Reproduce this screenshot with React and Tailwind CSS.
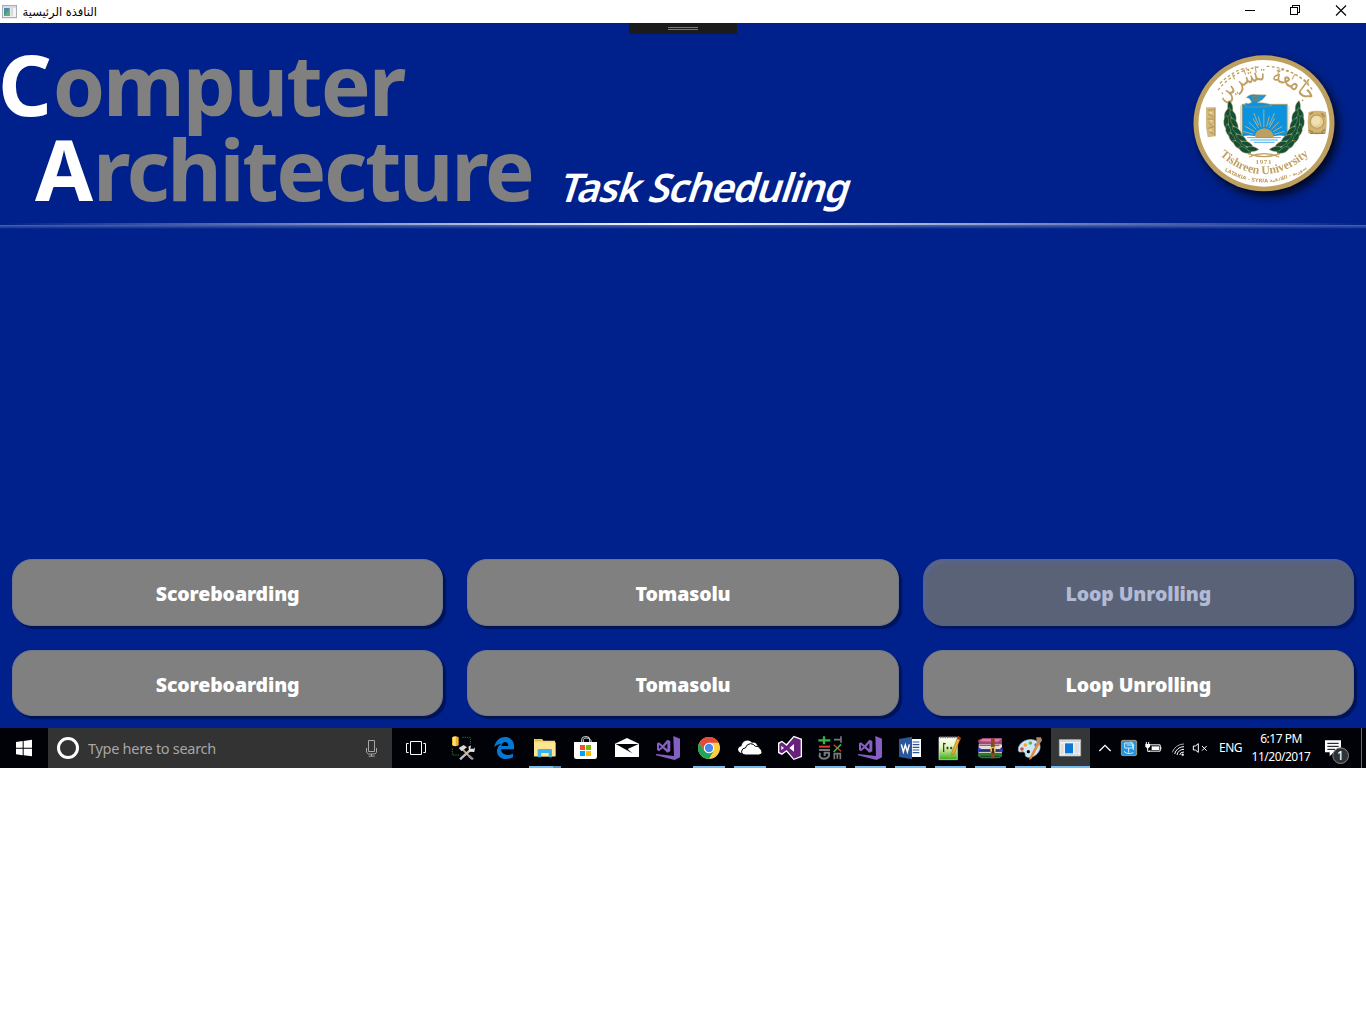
import React from "react";

const actions = [
  { label: "Scoreboarding" },
  { label: "Tomasolu" },
  { label: "Loop Unrolling", disabled: true },
  { label: "Scoreboarding" },
  { label: "Tomasolu" },
  { label: "Loop Unrolling" },
];

function TitleBar() {
  return (
    <div className="flex h-[23px] items-center justify-between bg-white">
      <div className="flex items-center">
        <svg className="ml-[2px] h-[14px] w-[15px]" viewBox="0 0 45 42">
          <rect x="1" y="1" width="43" height="37" fill="#eef0f2" stroke="#9aa0a6" strokeWidth="3" />
          <rect x="3" y="4" width="39" height="4" fill="#c9d3dd" />
          <rect x="6" y="9" width="17" height="24" fill="#4d8f9c" />
          <path d="M6 33L23 12V33Z" fill="#5fae7c" />
          <rect x="26" y="9" width="7" height="24" fill="#d9dcdf" />
          <rect x="35" y="9" width="5" height="24" fill="#f7f7f7" />
        </svg>
        <span dir="rtl" className="ml-[6px] inline-block w-[74px] whitespace-nowrap font-['DejaVu_Sans',sans-serif] text-[11.500px] leading-[22px] text-black">
          النافذة الرئيسية
        </span>
      </div>
      <svg className="h-[23px] w-[140px]" viewBox="0 0 140 23" fill="none" stroke="#000" shapeRendering="crispEdges">
        <path d="M19 10.5h10" />
        <path d="M64.5 7.5h7v7h-7zM66.5 7.5v-2h7v7h-2" />
        <path d="M110 5.500l10 10M120 5.500l-10 10" shapeRendering="auto" strokeWidth="1.100" />
      </svg>
    </div>
  );
}

function Laurel() {
  const leaves = [
    [152, 322, -12], [142, 342, 22], [161, 347, -25], [139, 366, 5], [165, 370, -35],
    [146, 392, -12], [173, 393, -48], [158, 415, -28], [186, 414, -60], [175, 435, -45],
    [203, 432, -70], [195, 450, -62], [219, 446, -85],
  ];
  return (
    <g fill="#0f5136" stroke="#b39a5c" strokeWidth="1.200">
      <path d="M151 312Q136 400 212 458" fill="none" stroke="#0f5136" strokeWidth="12" />
      {leaves.map(([x, y, r]) => (
        <path key={x + "-" + y} d="M0 -22Q15 -3 0 18Q-15 -3 0 -22Z" transform={`translate(${x} ${y}) rotate(${r})`} />
      ))}
    </g>
  );
}

function Emblem() {
  const rays = [-75, -60, -45, -30, -15, 15, 30, 45, 60, 75];
  return (
    <svg
      className="h-[137px] w-[142px] drop-shadow-[4px_5px_5px_rgba(0,0,0,0.8)]"
      viewBox="40 164 425 411"
      preserveAspectRatio="none"
    >
      <defs>
        <path id="arcTop" d="M133 304Q252 176 384 304" />
        <path id="arcName" d="M121 465Q250 578 386 465" />
        <path id="arcCity" d="M134 511Q255 584 382 505" />
      </defs>
      <ellipse cx="252.500" cy="369" rx="211" ry="204" fill="#bd9f5f" />
      <ellipse cx="252.500" cy="369" rx="196" ry="190" fill="#fff" />
      <g fill="#bfa062" textAnchor="middle">
        <text direction="rtl" fontFamily="DejaVu Sans, sans-serif" fontSize="70">
          <textPath href="#arcTop" startOffset="50%" textLength="296" lengthAdjust="spacingAndGlyphs">جامعة تشرين</textPath>
        </text>
        <text fontFamily="Liberation Serif, serif" fontSize="36" fontWeight="700">
          <textPath href="#arcName" startOffset="50%" textLength="296" lengthAdjust="spacingAndGlyphs">Tishreen University</textPath>
        </text>
        <text fontFamily="DejaVu Sans, sans-serif" fontSize="15" fontWeight="700">
          <textPath href="#arcCity" startOffset="50%" textLength="262" lengthAdjust="spacingAndGlyphs">LATAKIA - SYRIA سورية - اللاذقية</textPath>
        </text>
        <text x="251" y="491" fontFamily="Liberation Serif, serif" fontSize="21" fontWeight="700" textLength="48">1971</text>
      </g>
      <g stroke="#bfa062" strokeWidth="4" strokeLinecap="round" strokeDasharray="5 10" fill="none">
        <path d="M116 268Q160 212 235 200" />
        <path d="M122 248Q165 208 200 203M262 198Q350 203 400 272M305 208Q345 215 385 248" />
        <path d="M158 220l6 16M192 206l5 16M226 198l3 18M298 206l-4 16M345 222l-8 14" strokeDasharray="none" strokeWidth="3" />
      </g>
      <path d="M187 312H322V410H187Z" fill="#0c93e0" stroke="#b8985a" strokeWidth="2.500" />
      <path d="M182 316v92M327 316v92" stroke="#e3d8ba" strokeWidth="3" />
      <path d="M196 308Q208 314 216 305L208 294L200 292Q210 280 228 283L259 284Q250 300 231 307Q264 306 276 316L242 320H198Z" fill="#0c93e0" stroke="#b8985a" strokeWidth="1.500" />
      <path d="M214 290L257 284.500M216 296L250 291M218 302L243 297" stroke="#a98d4c" strokeWidth="2" />
      <g stroke="#c0b384" strokeWidth="2.500">
        {rays.map((r) => (
          <path key={r} d="M252 378V346" transform={`rotate(${r} 252 410)`} />
        ))}
        <path d="M252 380V328M236 374L222 338M268 374L284 338" />
      </g>
      <path d="M224 412Q226 387 253 384Q280 387 282 412Z" fill="#bd9f5f" />
      <path d="M186 408Q220 402 232 412H274Q290 402 320 408L296 440H210Z" fill="#fff" />
      <path d="M202 412H303M212 419H294M222 426H284" stroke="#2b9be0" strokeWidth="2.500" />
      <Laurel />
      <g transform="translate(505 0) scale(-1 1)"><Laurel /></g>
      <path d="M205 460Q252 478 300 460M208 470Q252 450 298 470" fill="none" stroke="#bd9f5f" strokeWidth="4" />
      <path d="M79 321H108V408L84 411L79 380Z" fill="#d3b97f" />
      <path d="M84 330l18 -3M85 342l17 8M83 356h20M87 366l12 14M84 384l20 -5M90 394l12 8M105 322v84" stroke="#a98d4c" strokeWidth="2.500" />
      <path d="M90 336l8 3M91 361l8 2M88 389l8 2" stroke="#efdca9" strokeWidth="4" />
      <path d="M386 335Q412 328 438 335Q443 365 437 399Q410 405 385 399Q381 365 386 335Z" fill="#d1b373" />
      <path d="M389 342l10 -6M424 339l10 10M387 389l12 7M424 397l11 -10M390 399h45" stroke="#a08446" strokeWidth="4" />
      <circle cx="411" cy="364" r="20" fill="#e8d29a" stroke="#b89a58" strokeWidth="3" />
      <circle cx="408" cy="361" r="13" fill="#f1e0b2" />
    </svg>
  );
}

function Header() {
  return (
    <div className="flex h-[200px] justify-between">
      <div className="flex">
        <div className="w-[557px] whitespace-nowrap font-['Noto_Sans','Open_Sans',sans-serif] text-[84px] font-bold leading-[85px] text-[#808080]">
          <div className="-ml-[2px] mt-[18px] h-[85px] tracking-[-2.100px]">
            <span className="tracking-[0.700px] text-white">C</span>omputer
          </div>
          <div className="h-[85px] pl-[35px] tracking-[-2.400px]">
            <span className="tracking-[-0.200px] text-white">A</span>rchitecture
          </div>
        </div>
        <div className="mt-[137px] origin-[0_42px] whitespace-nowrap font-['Noto_Sans','Open_Sans',sans-serif] text-[39.500px] font-semibold leading-[54px] tracking-[-1.250px] text-white [transform:skewX(-18deg)]">
          Task Scheduling
        </div>
      </div>
      <div className="flex flex-col pr-[31px] pt-[32px]">
        <Emblem />
      </div>
    </div>
  );
}

function ActionButton({ label, disabled }) {
  return (
    <button
      disabled={disabled}
      className={
        "m-3 flex items-center justify-center rounded-[20px] border pt-[3px] font-['Noto_Sans','Open_Sans',sans-serif] text-[19.500px] font-black tracking-[-0.120px] " +
        (disabled
          ? "border-[#56618a] bg-[#5a6277] text-[#b3bad4] shadow-[3px_3px_1px_#001768,inset_3px_3px_3px_#58658b]"
          : "border-[#71778a] bg-[#808080] text-white shadow-[3px_3px_1px_#001458]")
      }
    >
      {label}
    </button>
  );
}

/* Taskbar glyphs */

const visualStudioInstaller = (
  <g fill="#865fc5">
    <path d="M130 30L150 38V94L134 102L78 88V84L132 90Z" />
    <path d="M81 52L87 49L98 58L112 41L121 45V76L112 80L98 67L87 76L81 72ZM87 57V68L94 62ZM112 52L103 62L112 70Z" fillRule="evenodd" />
  </g>
);

const visualStudio = <g transform="translate(-54 0)">{visualStudioInstaller}</g>;

const apps = [
  {
    name: "SQL tools",
    box: "141 6 123 120",
    art: (
      <>
        <path d="M202 34H226V54M172 68V87H196" fill="none" stroke="#267a2b" strokeWidth="3" strokeDasharray="4 3" />
        <path d="M171 34Q181 27 191 34V58Q181 64 171 58Z" fill="#efb12a" />
        <path d="M174 34Q178 31 182 32V60L174 58Z" fill="#ffe38a" />
        <path d="M200 67L229 97" stroke="#d3a060" strokeWidth="6" />
        <path d="M191 66L206 57L216 64L200 76Z" fill="#d4d9dd" />
        <path d="M228 70L195 100" stroke="#b9c3cc" strokeWidth="7" />
        <path d="M220 62L228 58L226 68L236 68L240 64L238 78L223 77Z" fill="#dfe4e8" />
        <path d="M222 90L234 100" stroke="#8e99a3" strokeWidth="7" />
      </>
    ),
  },
  {
    name: "Edge",
    box: "264 6 123 120",
    art: (
      <path
        d="M298 63C302 42 316 33 330 33C348 33 358 47 357 62V70H318C319 83 330 88 341 87Q348 86 354 83V94Q345 99 333 99C316 99 305 88 306 73C307 63 312 57 320 53Q308 53 298 63ZM319 60H340Q340 48 330 48Q321 50 319 60Z"
        fill="#0478d7"
        fillRule="evenodd"
      />
    ),
  },
  {
    name: "File Explorer",
    box: "387 6 123 120",
    art: (
      <>
        <path d="M417 39H441L445 44H480V91H417Z" fill="#f7d774" />
        <path d="M420 41H440V44H420Z" fill="#d9a520" />
        <path d="M417 49H482V91H417Z" fill="#fde594" />
        <path d="M428 94V73Q428 69 432 69H467Q471 69 471 73V94H461V81H439V94Z" fill="#39b3e8" />
        <path d="M440 82H460V91H440Z" fill="#fde594" />
      </>
    ),
    split: true,
  },
  {
    name: "Store",
    box: "510 6 123 120",
    art: (
      <>
        <path d="M560 49V41Q560 32 569 32H576Q584 32 584 41V49M565 49V40Q566 36 574 36Q589 37 589 49" fill="none" stroke="#fff" strokeWidth="2.500" />
        <path d="M537 48H606V92Q606 99 599 99H544Q537 99 537 92Z" fill="#fff" />
        <path d="M555 57H570V72H555Z" fill="#f0512b" />
        <path d="M573 57H588V72H573Z" fill="#7eb900" />
        <path d="M555 75H570V90H555Z" fill="#00a3ee" />
        <path d="M573 75H588V90H573Z" fill="#fdb900" />
      </>
    ),
  },
  {
    name: "Mail",
    box: "633 6 123 120",
    art: (
      <>
        <path d="M660 53L696 36L732 53V93H660Z" fill="#fff" />
        <path d="M662 54H731L698 69L712 82Z" fill="#000208" />
      </>
    ),
  },
  { name: "Visual Studio Installer", box: "51 6 123 120", art: visualStudioInstaller },
  {
    name: "Chrome",
    box: "174 6 123 120",
    open: true,
    art: (
      <>
        <circle cx="237" cy="66" r="33" fill="#fdcf40" />
        <path d="M237 50H266A33 33 0 0 0 208 50L222 73Z" fill="#e24a3b" />
        <path d="M208 50A33 33 0 0 0 237 99L251 74L237 80L223 74Z" fill="#22a35a" />
        <circle cx="237" cy="66" r="15.500" fill="#fff" />
        <circle cx="237" cy="66" r="12.500" fill="#4688f4" />
      </>
    ),
  },
  {
    name: "OneDrive",
    box: "297 6 123 120",
    open: true,
    art: (
      <>
        <path d="M331 80Q322 76 325 67Q328 61 334 61Q336 48 347 44Q359 41 366 50Q379 47 383 61L360 84Z" fill="#fff" />
        <path d="M347 87Q334 86 335 75Q337 66 346 66Q350 54 361 53Q371 53 376 61Q386 58 390 68Q396 70 396 79Q395 87 386 87Z" fill="#fff" stroke="#000208" strokeWidth="3" />
      </>
    ),
  },
  {
    name: "Visual Studio 2015",
    box: "420 6 120 120",
    art: (
      <>
        <path d="M444 50L456 44L469 54L491 29L516 38V93L491 102L469 77L456 87L444 81Z" fill="#fff" />
        <path d="M448 53L456 49L470 60L492 34L512 41V90L492 98L470 72L456 82L448 78ZM454 59V72L462 66ZM492 54L478 66L492 77Z" fill="#68217a" fillRule="evenodd" />
      </>
    ),
  },
  {
    name: "Git Extensions",
    box: "540 6 120 120",
    open: true,
    art: (
      <g fill="none">
        <path d="M570 80Q565 98 582 98Q600 98 597 80H584V90" stroke="#77787a" strokeWidth="6" />
        <path d="M567 72H600" stroke="#77787a" strokeWidth="6" />
        <path d="M567 62H600" stroke="#e03b2d" strokeWidth="6" />
        <path d="M565 43H601M582 31V55" stroke="#37b34a" strokeWidth="7" />
        <path d="M613 100V83H631V100M622 84V98" stroke="#77787a" strokeWidth="5" />
        <path d="M611 56L633 76" stroke="#e03b2d" strokeWidth="4" />
        <path d="M611 78L633 55" stroke="#37b34a" strokeWidth="5" />
        <path d="M612 41H633M633 31V50" stroke="#77787a" strokeWidth="5" />
      </g>
    ),
  },
  { name: "Visual Studio", box: "0 6 120 120", open: true, art: visualStudio },
  {
    name: "Word",
    box: "120 6 120 120",
    open: true,
    art: (
      <>
        <path d="M180 39H213V93H180Z" fill="#fff" />
        <path d="M188 48h20M188 56h20M188 64h20M188 72h20M188 80h20" stroke="#2b579a" strokeWidth="3.500" />
        <path d="M147 39L186 32V100L147 93Z" fill="#2b579a" />
        <path d="M154 55L160 77L166 57L172 77L178 55" fill="none" stroke="#fff" strokeWidth="4.500" />
      </>
    ),
  },
  {
    name: "Notepad++",
    box: "240 6 120 120",
    open: true,
    art: (
      <>
        <defs>
          <linearGradient id="npp" x2="0" y2="1">
            <stop offset="0" stopColor="#fff" />
            <stop offset="0.450" stopColor="#dff5b5" />
            <stop offset="1" stopColor="#3da915" />
          </linearGradient>
        </defs>
        <path d="M267 34H322V101H267Z" fill="url(#npp)" stroke="#e9eee2" strokeWidth="2" />
        <path d="M270 34H320" stroke="#7c7c7c" strokeWidth="5" strokeDasharray="4 3" />
        <path d="M281 50V78M281 53H287M289 66H296M300 66H307M292.500 62V70M303.500 62V70" stroke="#29372c" strokeWidth="3.500" />
        <path d="M324 31L332 36L313 83L305 87L306 78Z" fill="#e9b42c" stroke="#8c5b13" strokeWidth="1.500" />
        <path d="M324 31L332 36L330 42L321 38Z" fill="#b52c2c" />
      </>
    ),
  },
  {
    name: "WinRAR",
    box: "360 6 120 120",
    open: true,
    art: (
      <>
        <path d="M384 43L398 36H456V53L444 58H388Z" fill="#a94478" />
        <path d="M388 46L398 39H454L444 47Z" fill="#d184a8" />
        <path d="M386 55H456V64L450 69H386Z" fill="#e4ddd3" />
        <path d="M384 63L394 69H452L458 65V77L450 80H384Z" fill="#3040c8" />
        <path d="M386 78H456V83H386Z" fill="#cfc7bb" />
        <path d="M384 81H456V91L448 97H394L384 91Z" fill="#238029" />
        <path d="M388 58H448M388 74H448M392 91H448" stroke="#1c1638" strokeWidth="2" />
        <path d="M423 38H434V97H423Z" fill="#8a4b1d" />
        <path d="M421 63H437V77H421Z" fill="#e6bd52" />
        <path d="M426 67H432V82H426Z" fill="#3d2a17" />
      </>
    ),
  },
  {
    name: "Paint",
    box: "480 6 120 120",
    open: true,
    art: (
      <>
        <path d="M505 69C506 51 528 38 548 41C566 44 574 56 569 71C564 87 543 98 530 93C522 89 529 81 522 78C514 76 504 83 505 69Z" fill="#cfe6f5" stroke="#8bb6d2" strokeWidth="2" />
        <circle cx="516" cy="69" r="5.500" fill="#dc4b37" />
        <circle cx="526" cy="57" r="5.500" fill="#f0a62f" />
        <circle cx="541" cy="51" r="5.500" fill="#58b947" />
        <circle cx="558" cy="57" r="5" fill="#3579cf" />
        <circle cx="535" cy="77" r="5" fill="#000208" />
        <path d="M561 50L569 54L544 99L537 101L540 92Z" fill="#e18a3d" />
        <path d="M559 34L573 34L576 43L569 54L560 50Z" fill="#b88960" />
      </>
    ),
  },
  {
    name: "Main window",
    box: "600 6 120 120",
    active: true,
    art: (
      <>
        <path d="M628 41H692V90H628Z" fill="#f1f2f2" stroke="#b3b5b8" strokeWidth="2" />
        <path d="M629 42H691V48H629Z" fill="#d3d5d8" />
        <path d="M632 53H641V85H632Z" fill="#ddd" />
        <path d="M645 52H669V82H645Z" fill="#0a78d6" />
        <path d="M673 54H688M673 60H688M673 66H688M673 72H688M673 78H688M645 86H688" stroke="#c4c6c9" strokeWidth="2.500" />
      </>
    ),
  },
];

function TaskApp({ app, wide }) {
  return (
    <div className={"relative h-10 shrink-0 " + (wide ? "w-[41px]" : "w-10")}>
      {app.active && <div className="absolute inset-y-0 left-px right-0 bg-[#353638]" />}
      <svg className="relative h-10 w-full" viewBox={app.box} aria-label={app.name}>
        {app.art}
      </svg>
      {app.open && <div className={"absolute bottom-0 left-[5px] h-[2px] bg-[#76b9ed] " + (wide ? "w-8" : "w-[31px]")} />}
      {app.active && <div className="absolute bottom-0 left-px right-0 h-[2px] bg-[#76b9ed]" />}
      {app.split && (
        <div className="absolute bottom-0 left-[5px] flex h-[2px]">
          <div className="w-6 bg-[#76b9ed]" />
          <div className="w-2 bg-[#5a8db5]" />
        </div>
      )}
    </div>
  );
}

function Tray() {
  return (
    <div className="flex grow font-['Noto_Sans','Open_Sans',sans-serif] text-[12px] text-white">
      <svg className="h-10 w-[124px] shrink-0" viewBox="30 6 372 120" fill="none" stroke="#fff" strokeWidth="3">
        <path d="M58 75L75 58L92 75" strokeWidth="4" />
        <rect x="124" y="43" width="46" height="46" rx="5" fill="#2794d9" stroke="#e9b06c" strokeWidth="2" />
        <path d="M134 51H158V66H134ZM140 57H160V72M132 76Q142 87 160 80M146 66V80M152 47L162 59" stroke="#c9edff" strokeWidth="3" />
        <path d="M210 56.500H240.500V75.500H207M242.500 62V71" />
        <path d="M215 61H237V72H215Z" fill="#fff" stroke="none" />
        <path d="M199 48V54M206 48V54M203 66V76H210" strokeWidth="3" />
        <path d="M196 54H210V62L203 68L196 62Z" fill="#fff" stroke="none" />
        <path d="M277 79A36 36 0 0 1 312 54" stroke="#a5a6a8" strokeWidth="3" />
        <path d="M284 84A28 28 0 0 1 312 62M291 87A20 20 0 0 1 312 70M299 87A12 12 0 0 1 312 78" strokeWidth="3" />
        <circle cx="308" cy="86" r="3.500" fill="#fff" stroke="none" />
        <path d="M340 60H346L355 53V79L346 72H340Z" strokeWidth="3" />
        <path d="M366 60L380 74M380 60L366 74" strokeWidth="3" />
      </svg>
      <div className="ml-[5px] w-[25px] whitespace-nowrap leading-[40px] tracking-[-0.500px]">ENG</div>
      <div className="flex w-[74px] flex-col whitespace-nowrap pt-[2px] text-center leading-[18px] tracking-[-0.500px]">
        <span>6:17 PM</span>
        <span>11/20/2017</span>
      </div>
      <svg className="h-10 w-[43px] shrink-0" viewBox="714 6 129 120">
        <path d="M735 43H783V79H761L749 91V79H735Z" fill="#fff" />
        <path d="M742 52H776M742 61H776M742 70H765" stroke="#000208" strokeWidth="3" />
        <circle cx="782" cy="89" r="23.500" fill="#303134" stroke="#85868a" strokeWidth="3" />
        <text x="781" y="101" textAnchor="middle" fill="#fff" fontFamily="Noto Sans, sans-serif" fontWeight="500" fontSize="35">1</text>
      </svg>
      <div className="h-10 w-px bg-[#66686b]" />
    </div>
  );
}

function Taskbar() {
  return (
    <div className="flex h-10 bg-[#000208]">
      <svg className="h-10 w-12 shrink-0" viewBox="0 6 144 120" fill="#fff">
        <path d="M48 48L68 45V65H48ZM71 45L96 41V65H71ZM48 68H68V88L48 85ZM71 68H96V91L71 88Z" />
      </svg>
      <div className="flex h-10 w-[344px] shrink-0 items-center bg-[#333333]">
        <div className="ml-[9px] h-[22px] w-[22px] rounded-full border-[3px] border-white" />
        <span className="ml-[9px] grow whitespace-nowrap pt-[2px] font-['Noto_Sans','Open_Sans',sans-serif] text-[14.500px] tracking-[-0.290px] text-[#a6a6a6]">
          Type here to search
        </span>
        <svg className="mr-[13px] h-10 w-[14px]" viewBox="1095 6 42 120" fill="none" stroke="#a6a6a6" strokeWidth="3">
          <path d="M1105.500 43.500H1123.500V76.500H1105.500ZM1099.500 66V79L1105 84H1125L1129.500 79V66M1114.500 84V90M1106 90.500H1124" />
        </svg>
      </div>
      <svg className="h-10 w-[50px] shrink-0" viewBox="-9 6 150 120" fill="none" stroke="#fff" strokeWidth="3">
        <path d="M46.500 46.500H79.500V85.500H46.500ZM41 52.500H34.500V79.500H41M85 52.500H91.500V79.500H85" />
      </svg>
      {apps.map((app, i) => (
        <TaskApp key={app.name} app={app} wide={i < 8} />
      ))}
      <Tray />
    </div>
  );
}

export default function App() {
  return (
    <div className="h-[1024px] w-[1366px] overflow-hidden bg-white">
      <TitleBar />
      <div className="relative flex h-[705px] flex-col bg-[#00218b]">
        <div className="absolute left-[629px] top-0 flex h-[11px] w-[108px] flex-col items-center gap-px bg-[#1b1b1b] pt-[4px]">
          <div className="h-px w-[30px] bg-[#77777a]" />
          <div className="h-px w-[30px] bg-[#77777a]" />
        </div>
        <Header />
        <div className="h-[2px] bg-gradient-to-r from-transparent via-white to-transparent" />
        <div className="h-[4px] bg-gradient-to-b from-[#4c62ae] to-[#00218b]" />
        <div className="grow" />
        <div className="grid h-[181px] grid-cols-3 grid-rows-2">
          {actions.map((a, i) => (
            <ActionButton key={i} {...a} />
          ))}
        </div>
      </div>
      <Taskbar />
    </div>
  );
}
